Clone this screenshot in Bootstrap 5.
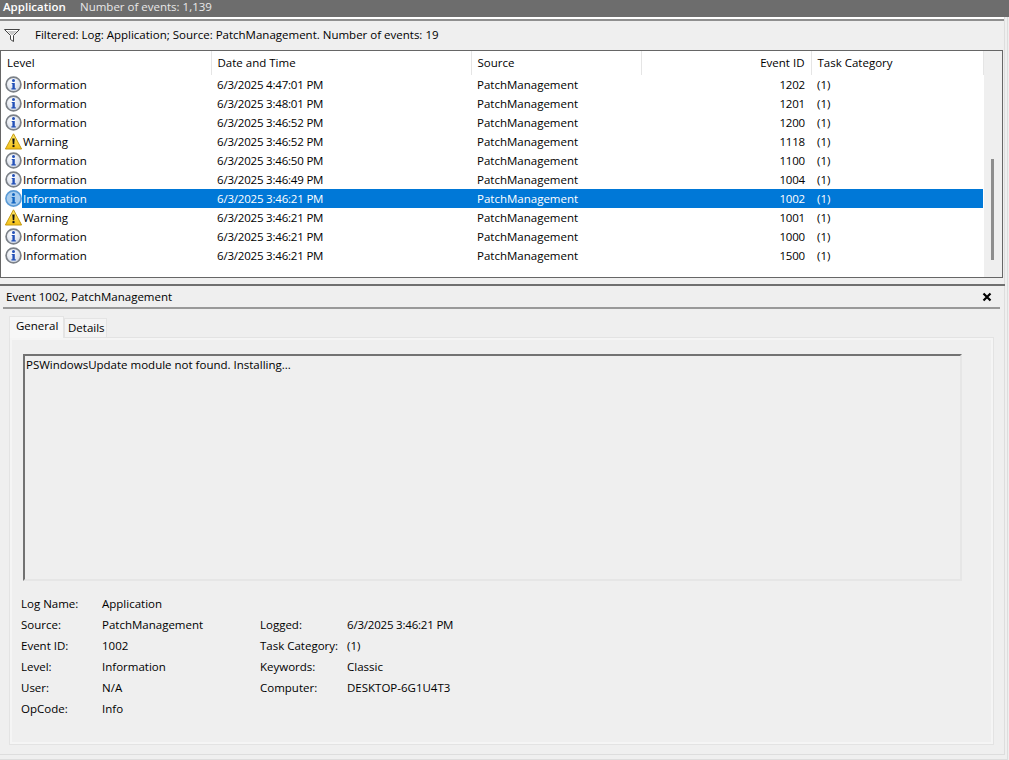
<!DOCTYPE html>
<html lang="en"><head><meta charset="utf-8"><title>Event Viewer</title>
<link href="https://cdn.jsdelivr.net/npm/bootstrap@5.3.0/dist/css/bootstrap.min.css" rel="stylesheet">
<style>
html,body{height:760px;overflow:hidden}
body{background:#efefef;font:11.5px/19px "Open Sans","Noto Sans",sans-serif;color:#000;margin:0}
.ev-outer{width:1008px;height:760px;border-right:1px solid #ddd;border-bottom:1px solid #ddd}
.ev-frame{width:1005px;height:755px;border-right:1px solid #ddd;border-bottom:1px solid #ddd}
.ev-top{width:1009px;height:17px;background:#6d6d6d;color:#e8e8e8;line-height:14px;padding-left:3px}
.ev-top b{color:#fff;width:77px;font-size:11.5px;font-weight:600}
.ev-rule{height:4px;border-top:2px solid #fff;border-bottom:2px solid #8f8f8f}
.ev-filter{height:29px;gap:15px;padding:0 0 2px 4px}
.ev-filter svg{margin-top:1px}
.ev-list{height:228px;border:1px solid #666;background:#fff;margin-right:1px}
.ev-scroll{width:20px;background:#efefef;padding-left:7px;padding-top:108px}
.ev-thumb{width:3px;height:101px;background:#8e8e8e}
.ev-tbl{width:982px;table-layout:fixed;border-collapse:collapse;align-self:flex-start}
.ev-tbl th{font-weight:400;height:24px;padding:0 6px 2px;border-right:1px solid #e5e5e5;vertical-align:middle}
.ev-tbl td{height:19px;padding:0 6px;white-space:nowrap}
.ev-tbl td:first-child{padding:0}
.ev-tbl td:nth-child(2),.ev-tbl td:nth-child(4),.ev-stamp{letter-spacing:-.2px}
.ev-lvl{display:flex;align-items:center;height:19px}
.ev-lvl svg{flex:none;margin:0 1px 0 4px;width:17px;height:17px}
.ev-sel td{background:#0078d7;color:#fff}
.ev-sel td:first-child{background:linear-gradient(90deg,#fff 21px,#0078d7 21px)}
.ev-sep{height:8px;margin-right:-1px;padding-top:6px}
.ev-sep i{display:block;height:2px;background:#6f6f6f}
.ev-head{height:21px;padding:0 12px 0 6px}
.ev-line{height:2px;background:#999;margin:0 4px 0 3px}
.ev-tabs{height:28px;padding-left:9px;align-items:flex-end}
.ev-tab{height:19px;padding:0 3px;width:43px;background:#f4f4f4;border:1px solid #e4e4e4;border-bottom:0;line-height:17px}
.ev-tab.ev-on{height:22px;width:55px;padding:0 6px;background:#f7f7f7;margin-bottom:-1px;z-index:1;position:relative;line-height:18px}
.ev-pane{height:408px;width:985px;margin-left:9px;border:1px solid #e3e3e3;box-shadow:inset 0 0 0 2px #f5f5f5;padding:16px 0 0 13px}
.ev-box{width:939px;height:227px;border-style:solid;border-width:2px;border-color:#727272 #e6e6e6 #e6e6e6 #727272;padding:0 1px;line-height:17px}
.ev-grid{display:grid;grid-template-columns:81px 158px 87px 1fr;grid-auto-rows:21px;margin:12px 0 0 -2px;line-height:21px}
</style></head>
<body>
<svg width="0" height="0" class="d-block">
<defs>
<radialGradient id="gi" cx=".4" cy=".35" r=".7"><stop offset="0" stop-color="#fff"/><stop offset="1" stop-color="#cfd6e4"/></radialGradient>
<linearGradient id="gw" x1="0" y1="0" x2="0" y2="1"><stop offset="0" stop-color="#ffec70"/><stop offset="1" stop-color="#f5c015"/></linearGradient>
<symbol id="i-info" viewBox="0 0 17 17"><circle cx="8.5" cy="8.5" r="7.4" fill="url(#gi)" stroke="#7b8087" stroke-width="1.7"/><circle cx="8.5" cy="4.6" r="1.5" fill="#2350b8"/><path d="M6.7 6.9h3.1v5.3h1v1.2H6.4v-1.2h1V8.1h-.7z" fill="#2350b8"/></symbol>
<symbol id="i-sel" viewBox="0 0 17 17"><circle cx="8.5" cy="8.5" r="7.6" fill="#a9cdee" stroke="#5b9bd6" stroke-width="1.6"/><circle cx="8.5" cy="4.6" r="1.5" fill="#1466c0"/><path d="M6.7 6.9h3.1v5.3h1v1.2H6.4v-1.2h1V8.1h-.7z" fill="#1466c0"/></symbol>
<symbol id="i-warn" viewBox="0 0 17 17"><path d="M8.5.8 16.6 16H.4z" fill="url(#gw)" stroke="#c49a12" stroke-width="1" stroke-linejoin="round"/><path d="M7.3 5.5h2.4L9.2 11.2H7.8z" fill="#111"/><rect x="7.5" y="12.1" width="2" height="2" fill="#111"/></symbol>
</defs></svg>
<div class="ev-outer">
<div class="ev-frame">
<div class="ev-top d-flex"><b>Application</b><span>Number of events: 1,139</span></div>
<div class="ev-rule"></div>
<div class="ev-filter d-flex align-items-center">
<svg width="16" height="13" viewBox="0 0 16 13"><path d="M.5.5h15L9.5 6.5v6l-3-2v-4z" fill="#fff" stroke="#444"/><path d="M3 2h10L8.6 6H7.4z" fill="#c9c9c9"/></svg>
<span>Filtered: Log: Application; Source: PatchManagement. Number of events: 19</span></div>
<div class="ev-list d-flex">
<table class="ev-tbl">
<colgroup><col style="width:210px"><col style="width:260px"><col style="width:170px"><col style="width:170px"><col style="width:172px"></colgroup>
<thead><tr><th>Level</th><th>Date and Time</th><th>Source</th><th class="text-end">Event ID</th><th>Task Category</th></tr></thead>
<tbody>
<tr><td><div class="ev-lvl"><svg><use href="#i-info"/></svg><span>Information</span></div></td><td>6/3/2025 4:47:01 PM</td><td>PatchManagement</td><td class="text-end">1202</td><td>(1)</td></tr>
<tr><td><div class="ev-lvl"><svg><use href="#i-info"/></svg><span>Information</span></div></td><td>6/3/2025 3:48:01 PM</td><td>PatchManagement</td><td class="text-end">1201</td><td>(1)</td></tr>
<tr><td><div class="ev-lvl"><svg><use href="#i-info"/></svg><span>Information</span></div></td><td>6/3/2025 3:46:52 PM</td><td>PatchManagement</td><td class="text-end">1200</td><td>(1)</td></tr>
<tr><td><div class="ev-lvl"><svg><use href="#i-warn"/></svg><span>Warning</span></div></td><td>6/3/2025 3:46:52 PM</td><td>PatchManagement</td><td class="text-end">1118</td><td>(1)</td></tr>
<tr><td><div class="ev-lvl"><svg><use href="#i-info"/></svg><span>Information</span></div></td><td>6/3/2025 3:46:50 PM</td><td>PatchManagement</td><td class="text-end">1100</td><td>(1)</td></tr>
<tr><td><div class="ev-lvl"><svg><use href="#i-info"/></svg><span>Information</span></div></td><td>6/3/2025 3:46:49 PM</td><td>PatchManagement</td><td class="text-end">1004</td><td>(1)</td></tr>
<tr class="ev-sel"><td><div class="ev-lvl"><svg><use href="#i-sel"/></svg><span>Information</span></div></td><td>6/3/2025 3:46:21 PM</td><td>PatchManagement</td><td class="text-end">1002</td><td>(1)</td></tr>
<tr><td><div class="ev-lvl"><svg><use href="#i-warn"/></svg><span>Warning</span></div></td><td>6/3/2025 3:46:21 PM</td><td>PatchManagement</td><td class="text-end">1001</td><td>(1)</td></tr>
<tr><td><div class="ev-lvl"><svg><use href="#i-info"/></svg><span>Information</span></div></td><td>6/3/2025 3:46:21 PM</td><td>PatchManagement</td><td class="text-end">1000</td><td>(1)</td></tr>
<tr><td><div class="ev-lvl"><svg><use href="#i-info"/></svg><span>Information</span></div></td><td>6/3/2025 3:46:21 PM</td><td>PatchManagement</td><td class="text-end">1500</td><td>(1)</td></tr>
</tbody></table>
<div class="flex-grow-1"></div>
<div class="ev-scroll"><div class="ev-thumb"></div></div>
</div>
<div class="ev-sep"><i></i></div>
<div class="ev-head d-flex justify-content-between align-items-center"><span>Event 1002, PatchManagement</span>
<svg width="10" height="10" viewBox="0 0 10 10"><path d="M1.5 1.5l7 7M8.5 1.5l-7 7" stroke="#000" stroke-width="2.2" fill="none"/></svg></div>
<div class="ev-line"></div>
<div class="ev-tabs d-flex"><div class="ev-tab ev-on">General</div><div class="ev-tab">Details</div></div>
<div class="ev-pane">
<div class="ev-box">PSWindowsUpdate module not found. Installing...</div>
<div class="ev-grid">
<span>Log Name:</span><span>Application</span><span></span><span></span>
<span>Source:</span><span>PatchManagement</span><span>Logged:</span><span class="ev-stamp">6/3/2025 3:46:21 PM</span>
<span>Event ID:</span><span>1002</span><span>Task Category:</span><span>(1)</span>
<span>Level:</span><span>Information</span><span>Keywords:</span><span>Classic</span>
<span>User:</span><span>N/A</span><span>Computer:</span><span>DESKTOP-6G1U4T3</span>
<span>OpCode:</span><span>Info</span><span></span><span></span>
</div></div>
</div></div>
</body></html>
